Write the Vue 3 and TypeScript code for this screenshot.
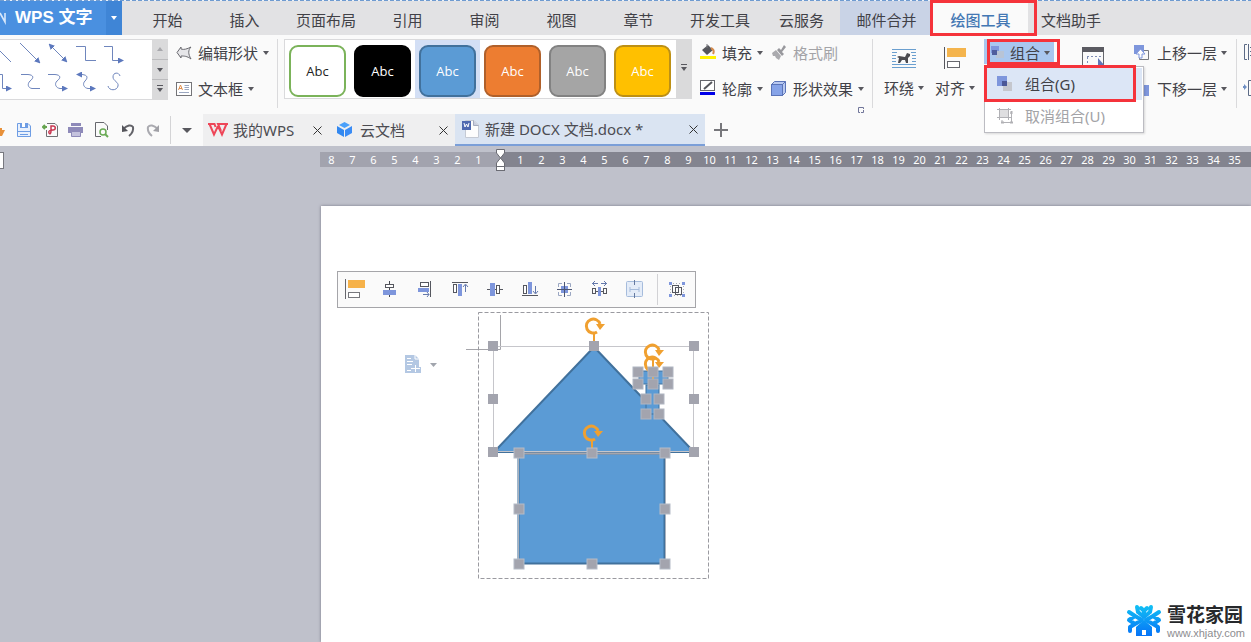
<script setup lang="ts">
interface MenuTab {
  label: string
  kind?: 'wide' | 'merge' | 'active'
}

const menuTabs: MenuTab[] = [
  { label: '开始' },
  { label: '插入' },
  { label: '页面布局', kind: 'wide' },
  { label: '引用' },
  { label: '审阅' },
  { label: '视图' },
  { label: '章节' },
  { label: '开发工具', kind: 'wide' },
  { label: '云服务' },
  { label: '邮件合并', kind: 'merge' },
  { label: '绘图工具', kind: 'active' },
  { label: '文档助手', kind: 'wide' },
]

const swatches = ['outline', 'black', 'blue', 'orange', 'gray', 'gold']

const leftMarks = [8, 7, 6, 5, 4, 3, 2, 1]
const rightMarks = Array.from({ length: 35 }, (_, i) => i + 1)

const roofHandles = [
  [493, 346], [594, 346], [694, 346], [493, 399], [694, 399], [493, 452], [694, 452],
]
const wallHandles = [
  [519, 453], [592, 453], [665, 453], [519, 509], [665, 509], [519, 564], [592, 564], [665, 564],
]
const chimneyHandles = [
  [638, 372], [668, 372], [638, 384], [668, 384], [653, 372], [653, 384],
  [646, 399], [659, 399], [646, 414], [659, 414],
]
const rotators = [
  [594, 326], [653, 352], [653, 364], [592, 433],
]
</script>

<template>
  <div class="app">
    <header class="menubar">
      <button class="brand" type="button">
        <svg class="brand-mark" width="8" height="14" viewBox="0 0 8 14"><path d="M0 2 5 11V2" fill="none" stroke="#d8e8fb" stroke-width="1.6" /></svg>
        <span class="brand-name">WPS 文字</span>
        <span class="brand-drop"><i class="caret"></i></span>
      </button>
      <nav class="tabs">
        <button v-for="t in menuTabs" :key="t.label" type="button" class="tab" :class="t.kind">{{ t.label }}</button>
      </nav>
    </header>

    <section class="ribbon">
      <div class="shape-gallery">
        <svg class="lines" width="152" height="59" viewBox="0 40 152 59" fill="none" stroke="#6f86bd" stroke-width="1">
          <defs>
            <marker id="tip" viewBox="0 0 6 6" refX="4" refY="3" markerWidth="6" markerHeight="6" orient="auto-start-reverse"><path d="M0 0 6 3 0 6z" fill="#5c78bd" stroke="none" /></marker>
          </defs>
          <path d="M0 51 11 62" />
          <path d="M20 43 39 62" marker-end="url(#tip)" />
          <path d="M50 45 66 61" marker-start="url(#tip)" marker-end="url(#tip)" />
          <path d="M76 46.500H85.500V60.500H96" />
          <path d="M104 46.500H112.500V60.500H122" marker-end="url(#tip)" />
          <path d="M0 74.500H2.500V88.500H10" marker-end="url(#tip)" />
          <path d="M21 74.500H28C34 75 34 78 30 81C27 84 28 88 32 88.500H40" />
          <path d="M48 74.500H55C61 75 61 78 57 81C54 84 56 88 60 88.500H66" marker-end="url(#tip)" />
          <path d="M78 74.500H82C88 75 88 78 85 81C82 84 84 88 88 88.500H94" marker-start="url(#tip)" marker-end="url(#tip)" />
          <path d="M120 76C119 72 113 72 113 77C113 81 119 82 118 86C117 91 109 91 108 86" />
        </svg>
        <div class="scroller">
          <button type="button" aria-label="上"><i class="caret up"></i></button>
          <button type="button" aria-label="下"><i class="caret"></i></button>
          <button type="button" aria-label="更多"><i class="caret more"></i></button>
        </div>
      </div>

      <div class="col edit-col">
        <button type="button" class="cmd">
          <svg width="16" height="16" viewBox="0 0 16 16"><path d="M1 7.500 5 2V4C8 5 11 4 15 2C12 5 12 9 15 14C11 11 8 11 5 11V13z" fill="#e6e6e9" stroke="#6a6a70" /></svg>
          <span>编辑形状</span><i class="caret"></i>
        </button>
        <button type="button" class="cmd">
          <svg width="16" height="16" viewBox="0 0 16 16" fill="none"><rect x=".5" y="1.500" width="15" height="13" fill="#fff" stroke="#747478" /><path d="M2.500 9 4.500 4 6.500 9M3 7.500H6" stroke="#e09050" /><path d="M8.500 4.500H13M8.500 6.500H13M8.500 8.500H13M3 11.500H13" stroke="#9ba7c0" /></svg>
          <span>文本框</span><i class="caret"></i>
        </button>
      </div>
      <i class="rule"></i>

      <div class="style-gallery">
        <div v-for="s in swatches" :key="s" class="cell" :class="{ picked: s === 'blue' }">
          <button type="button" class="swatch" :class="s">Abc</button>
        </div>
        <button type="button" class="expand" aria-label="更多样式"><i class="caret more"></i></button>
      </div>

      <div class="col fill-col">
        <button type="button" class="cmd">
          <svg width="16" height="18" viewBox="0 0 16 18"><path d="M2 6 8 1 13 6 7 11z" fill="#55565c" /><path d="M7 0V4" stroke="#77777d" /><path d="M11 4Q15 6 13 10" fill="none" stroke="#d58a4c" stroke-width="2" /><rect y="12" width="16" height="3" fill="#fff200" /></svg>
          <span>填充</span><i class="caret"></i>
        </button>
        <button type="button" class="cmd">
          <svg width="16" height="18" viewBox="0 0 16 18"><rect x=".5" y=".5" width="14" height="10" fill="#fff" stroke="#66676d" /><path d="M4 9 12 2" stroke="#55565c" stroke-width="2" /><rect y="12" width="15" height="3" fill="#0000e8" /></svg>
          <span>轮廓</span><i class="caret"></i>
        </button>
      </div>
      <div class="col effect-col">
        <button type="button" class="cmd off" disabled>
          <svg width="16" height="16" viewBox="0 0 16 16"><path d="M1 8 5 5 10 11 8 15 5 13 4 11 2 11z" fill="#aaaaae" /><path d="M6 5 8 3 10 5 13 0 15 2 11 7 13 9 11 11z" fill="#98989d" /></svg>
          <span>格式刷</span>
        </button>
        <button type="button" class="cmd">
          <svg width="16" height="16" viewBox="0 0 16 16" stroke="#5b74b8"><path d="M.5 3.500 3.500 .5H14.500V11.500L11.500 14.500H.5z" fill="#b9c9f0" /><rect x=".5" y="3.500" width="11" height="11" fill="#86a3e8" /><path d="M11.500 3.500 14.500 .5" /></svg>
          <span>形状效果</span><i class="caret"></i>
        </button>
        <svg class="launcher" width="6" height="6" viewBox="0 0 6 6" fill="none" stroke="#71769a"><path d="M5.500 2V.5H.5V5.500H2M3 5.500H5.500V3" /></svg>
      </div>
      <i class="rule"></i>

      <div class="big-col">
        <button type="button" class="big">
          <svg width="24" height="20" viewBox="0 0 24 20"><path d="M0 .5H24M0 3.500H24M0 6.500H4M20 6.500H24M0 9.500H4M20 9.500H24M0 12.500H4M20 12.500H24M0 15.500H24M0 18.500H24" stroke="#6b9fcf" /><path d="M5 3H19V15H5z" fill="#fafafa" /><path d="M6 14 7 9 5 8 7 7 13 8 15 4 18 5 18 7 16 9 16 14H14L13 11H10L8 14z" fill="#4b4b50" /></svg>
          <span class="big-label">环绕<i class="caret"></i></span>
        </button>
        <button type="button" class="big">
          <svg width="24" height="24" viewBox="0 0 24 24"><path d="M1.500 0V22" stroke="#55565c" /><rect x="4" y="1" width="19" height="9" fill="#f4b44d" /><rect x="4.500" y="14.500" width="12" height="6" fill="#fff" stroke="#66676d" /></svg>
          <span class="big-label">对齐<i class="caret"></i></span>
        </button>
      </div>

      <div class="group-col">
        <button type="button" class="cmd group-btn">
          <svg width="14" height="14" viewBox="0 0 14 14"><rect width="8" height="7" fill="#7e96dc" /><rect x="5" y="5" width="8" height="7" fill="#b8c4d6" /><rect x="1" y="4" width="5" height="5" fill="#4e5d9e" /></svg>
          <span>组合</span><i class="caret"></i>
        </button>
        <i class="callout group-callout"></i>
        <div class="popup" role="menu">
          <button type="button" class="item hot" role="menuitem">
            <svg width="16" height="16" viewBox="0 0 16 16"><rect width="10" height="10" fill="#7e96dc" /><rect x="6" y="6" width="9" height="9" fill="#c5c7ce" /><rect x="5" y="5" width="5" height="5" fill="#4c5898" /></svg>
            <span>组合(G)</span>
          </button>
          <button type="button" class="item dim" role="menuitem" disabled>
            <svg width="16" height="16" viewBox="0 0 16 16" fill="none" stroke="#b1b1b5"><rect x="2.500" y="1.500" width="9" height="8" fill="#dedee0" /><path d="M0 1.500H14M2.500 0V12M11.500 0V12M0 9.500H14M5 12V14.500H14.500V5H13" /><path d="M4 14.500H7M14.500 3V6M13 14.500H16" stroke-width="2" /></svg>
            <span>取消组合(U)</span>
          </button>
          <i class="callout item-callout"></i>
        </div>
      </div>

      <button type="button" class="select-btn" aria-label="选择窗格">
        <svg width="24" height="24" viewBox="0 0 24 24"><path d="M1.500 4V22M22.500 4V22" stroke="#66676d" /><rect x="1" width="22" height="5" fill="#5b5b62" /><path d="M6 9.500H20M6.500 10V20" stroke="#7f8db5" stroke-dasharray="2 2" /><path d="M17 11V20H25z" fill="#6176b8" /></svg>
      </button>

      <div class="col layer-col">
        <button type="button" class="cmd">
          <svg width="16" height="16" viewBox="0 0 16 16"><rect width="10" height="9" fill="#7e96dc" /><path d="M10 5.500H14.500V14.500H5.500V12" fill="none" stroke="#77797f" /><path d="M5 13V9H2L6.500 4 11 9H8V13z" fill="#fff" stroke="#7e96dc" /></svg>
          <span>上移一层</span><i class="caret"></i>
        </button>
        <button type="button" class="cmd">
          <svg width="16" height="16" viewBox="0 0 16 16"><rect x="4" y="4" width="11" height="11" fill="#7e96dc" /><path d="M.5 .5H9.500V9.500H.5z" fill="#fff" stroke="#77797f" /></svg>
          <span>下移一层</span><i class="caret"></i>
        </button>
      </div>
      <i class="rule"></i>
      <div class="col size-col">
        <svg width="16" height="36" viewBox="0 0 16 36" fill="none" stroke="#5c6a86"><path d="M4 9.500H1.500V24.500H4M5.500 9V25M7 12.500H10M7 16.500H10M7 20.500H10" /></svg>
        <svg width="16" height="36" viewBox="0 0 16 36" fill="none" stroke="#5c6a86"><path d="M9 9.500H5.500V24.500H9" /><path d="M0 15H1V13L4 16 1 19V17H0z" fill="#6f8fc4" stroke="none" /></svg>
      </div>
    </section>

    <section class="docbar">
      <div class="quick">
        <button type="button" aria-label="打开"><svg width="16" height="16" viewBox="0 0 16 16"><path d="M4 4H10V6H12V8H15L12 14H4z" fill="#e8913a" /></svg></button>
        <button type="button" aria-label="保存"><svg width="16" height="16" viewBox="0 0 16 16" fill="none"><path d="M1.500 1.500H12L14.500 4V14.500H1.500z" fill="#e9f1fd" stroke="#6e9de4" /><path d="M4 1H12V6H4z" fill="#6e9de4" /><path d="M6 1H9V5H6z" fill="#fff" /><path d="M1 9.500H15M4 12.500H12" stroke="#6e9de4" /></svg></button>
        <button type="button" aria-label="输出为PDF"><svg width="16" height="16" viewBox="0 0 16 16" fill="none"><path d="M4.500 8V14.500H15.500V4L13 1.500H5" stroke="#707074" /><path d="M7 11C8 13 9 11 9 9V4H11C14 4 14 8 11 8C8 8 6 9 7 11" stroke="#c93751" stroke-width="1.500" /><path d="M5 5H1M3 3 1 5 3 7" stroke="#65a44f" stroke-width="2" /></svg></button>
        <button type="button" aria-label="打印"><svg width="16" height="16" viewBox="0 0 16 16"><rect x="3" y="1" width="10" height="3" fill="#8e8ab9" /><rect y="5" width="15" height="6" fill="#8e8ab9" /><path d="M3.500 9.500H12.500V14.500H3.500z" fill="#c4c2dd" stroke="#8e8ab9" /></svg></button>
        <button type="button" aria-label="打印预览"><svg width="16" height="16" viewBox="0 0 16 16" fill="none"><path d="M7 14.500H1.500V.5H10L13.500 4V8" stroke="#66676d" /><circle cx="9" cy="10" r="3" stroke="#6aaa55" stroke-width="1.500" /><path d="M11 12 14 15" stroke="#6aaa55" stroke-width="2" /></svg></button>
        <button type="button" aria-label="撤销"><svg width="16" height="16" viewBox="0 0 16 16"><path d="M3 7Q10 1 13 5Q14 10 9 14" fill="none" stroke="#626268" stroke-width="2" /><path d="M2 3V10L8 9z" fill="#55555b" /></svg></button>
        <button type="button" aria-label="恢复"><svg width="16" height="16" viewBox="0 0 16 16"><path d="M12 7Q5 1 2 5Q1 10 6 14" fill="none" stroke="#aaaab0" stroke-width="2" /><path d="M13 3V10L7 9z" fill="#a0a0a6" /></svg></button>
      </div>
      <i class="quick-rule"></i>
      <button type="button" class="quick-more" aria-label="自定义"><i class="caret large"></i></button>

      <div class="doc">
        <svg width="20" height="16" viewBox="0 0 20 16"><path d="M0 2H6.500L7.500 5M1.500 2 6 12.500 10 4 14 12.500 18.500 2M20 2H10L13 9" fill="none" stroke="#ee4658" stroke-width="2" /></svg>
        <a href="#">我的WPS</a>
        <button type="button" class="close" aria-label="关闭"><svg width="9" height="9" viewBox="0 0 9 9"><path d="M.5 .5 8.500 8.500M8.500 .5 .5 8.500" stroke="#333" /></svg></button>
      </div>
      <div class="doc cloud">
        <svg width="16" height="16" viewBox="0 0 16 16"><path d="M7.500 0 13 3 7.500 6 2 3z" fill="#4aa0fa" /><path d="M0 4 7 8V15L0 11z" fill="#3288f0" /><path d="M15 4 8 8V15L15 11z" fill="#3a8cf5" /></svg>
        <a href="#">云文档</a>
        <button type="button" class="close" aria-label="关闭"><svg width="9" height="9" viewBox="0 0 9 9"><path d="M.5 .5 8.500 8.500M8.500 .5 .5 8.500" stroke="#333" /></svg></button>
      </div>
      <div class="doc current">
        <svg width="18" height="20" viewBox="0 0 18 20"><path d="M3.500 1.500H12L16.500 6V18.500H3.500z" fill="#fdfdfd" stroke="#c5cad4" /><path d="M11.500 1.500V6.500H16.500" fill="#c9cede" stroke="#a5acbf" /><rect y="2" width="9" height="9" fill="#4f69b0" /><path d="M2 4 3 8 4.500 5 6 8 7 4" fill="none" stroke="#fff" /></svg>
        <a href="#">新建 DOCX 文档.docx *</a>
        <button type="button" class="close" aria-label="关闭"><svg width="9" height="9" viewBox="0 0 9 9"><path d="M.5 .5 8.500 8.500M8.500 .5 .5 8.500" stroke="#333" /></svg></button>
      </div>
      <button type="button" class="plus" aria-label="新建标签"><svg width="14" height="14" viewBox="0 0 14 14"><path d="M7 0V14M0 7H14" stroke="#77777b" stroke-width="2" /></svg></button>
    </section>

    <main class="workspace">
      <div class="ruler-row">
        <i class="ruler-corner"></i>
        <div class="ruler margin-part"><span v-for="n in leftMarks" :key="n">{{ n }}</span></div>
        <div class="ruler text-part">
          <span v-for="n in rightMarks" :key="n">{{ n }}</span>
          <svg class="indent" width="9" height="23" viewBox="0 0 9 23" fill="#fff" stroke="#6b6c74"><path d="M.5 .5H8.500V4L4.500 9 .5 4z" /><path d="M4.500 9 8.500 14V17.500H.5V14z" /><rect x=".5" y="17.500" width="8" height="4" /></svg>
        </div>
      </div>

      <div class="page">
        <div class="align-bar" role="toolbar">
          <button type="button" aria-label="左对齐"><svg viewBox="0 0 24 24"><path d="M2.500 1V21" stroke="#66676d" /><rect x="5" y="2" width="17" height="8" fill="#f6b24a" /><rect x="5.500" y="14.500" width="11" height="5" fill="#fff" stroke="#77787d" /></svg></button>
          <button type="button" aria-label="水平居中"><svg viewBox="0 0 24 24"><path d="M11.500 3V19" stroke="#44474f" /><rect x="7.500" y="6.500" width="8" height="3" fill="#fff" stroke="#55575f" /><rect x="5" y="12" width="13" height="5" fill="#7e96dc" /></svg></button>
          <button type="button" aria-label="右对齐"><svg viewBox="0 0 24 24" fill="none" stroke="#55575f"><path d="M17.500 3V19" /><path d="M10 16.500H16M14 14 16 16.500 14 19" stroke="#6479ac" /><rect x="7.500" y="4.500" width="8" height="4" fill="#fff" /><path d="M5 10H16V14H5z" fill="#7e96dc" stroke="none" /></svg></button>
          <button type="button" aria-label="顶端对齐"><svg viewBox="0 0 24 24" fill="none" stroke="#55575f"><path d="M4 4.500H20" /><path d="M17.500 14V7M15 9 17.500 6 20 9" stroke="#6479ac" /><rect x="5.500" y="6.500" width="3" height="8" fill="#fff" /><path d="M10 6H14V18H10z" fill="#7e96dc" stroke="none" /></svg></button>
          <button type="button" aria-label="垂直居中"><svg viewBox="0 0 24 24" fill="none" stroke="#55575f"><path d="M4 11.500H20" /><path d="M7 5H12V18H7z" fill="#7e96dc" stroke="none" /><rect x="13.500" y="7.500" width="3" height="8" fill="#fff" /></svg></button>
          <button type="button" aria-label="底端对齐"><svg viewBox="0 0 24 24" fill="none" stroke="#55575f"><path d="M4 17.500H20" /><path d="M17.500 8V15M15 13 17.500 16 20 13" stroke="#6479ac" /><rect x="5.500" y="7.500" width="3" height="8" fill="#fff" /><path d="M10 4H14V16H10z" fill="#7e96dc" stroke="none" /></svg></button>
          <button type="button" aria-label="中心对齐"><svg viewBox="0 0 24 24" fill="none"><path d="M5.500 9V5.500H9M14 5.500H17.500V9M17.500 14V17.500H14M9 17.500H5.500V14" stroke="#9aa6c2" /><path d="M8 8H15V15H8z" fill="#7e96dc" /><path d="M11.500 4V19M4 11.500H19" stroke="#4c5674" /></svg></button>
          <button type="button" aria-label="横向分布"><svg viewBox="0 0 24 24" fill="none" stroke="#55575f"><path d="M4 5.500H10M13 5.500H19M7 3 4.500 5.500 7 8M16 3 18.500 5.500 16 8" stroke="#6479ac" /><rect x="4.500" y="10.500" width="3" height="5" /><rect x="15.500" y="10.500" width="3" height="5" /><path d="M8 13.500H15" /><path d="M10 9H13V18H10z" fill="#7e96dc" stroke="none" /></svg></button>
          <button type="button" aria-label="相对于页"><svg viewBox="0 0 24 24" fill="none" stroke="#a6bcdc"><rect x="3.500" y="3.500" width="16" height="15" rx="1" fill="#e4ecf8" /><path d="M7 11.500H16M7 9V14M16 9V14" /><path d="M11.500 2V7M11.500 15V20" stroke="#65799f" /></svg></button>
          <button type="button" class="group-tool" aria-label="组合"><svg viewBox="0 0 24 24" fill="none" stroke="#55575f"><path d="M8 5.500H16M18.500 8V16M16 17.500H8M5.500 15V8" stroke="#a9acb8" stroke-dasharray="1 2" /><rect x="7.500" y="7.500" width="6" height="7" /><rect x="10.500" y="9.500" width="6" height="7" /><path d="M4 4H7V7H4zM17 4H20V7H17zM4 16H7V19H4zM17 16H20V19H17z" fill="#7e96dc" stroke="none" /></svg></button>
        </div>

        <svg class="drawing" width="316" height="274" viewBox="400 308 316 274">
          <path d="M466 349.500H500.500V315" fill="none" stroke="#a5a5aa" />
          <rect x="478.500" y="312.500" width="230" height="266" fill="none" stroke="#9a9aa0" stroke-dasharray="4 2" />
          <path d="M405 355H415L419 359V367H421V373H405z" fill="#b4c8e3" />
          <path d="M415 355V359H419M407 358.500H411M407 361.500H413M407 364.500H412M407 370.500H411" stroke="#fff" fill="none" />
          <path d="M411 368.500H420M415.500 365V372" stroke="#fff" />
          <path d="M430 363H437L433.500 367z" fill="#a1a5ad" />
          <path d="M594 347 694 452H494z" fill="#5b9bd5" stroke="#41719c" stroke-width="2" />
          <rect x="493.500" y="346.500" width="200" height="105" fill="none" stroke="#c6c6cb" />
          <rect x="518.500" y="453.500" width="146" height="110" fill="#5b9bd5" stroke="#41719c" stroke-width="2" />
          <path d="M519 453.500H665" stroke="#a5a6ad" stroke-width="2" />
          <path d="M518.500 453V564M665.500 453V564" stroke="#a9b1bd" />
          <rect x="639" y="371" width="29" height="13" fill="#5b9bd5" stroke="#41719c" />
          <rect x="646" y="385" width="13" height="29" fill="#5b9bd5" stroke="#41719c" />
          <g v-for="([x, y], i) in rotators" :key="'r' + i" fill="none" stroke="#f0a030">
            <path :d="`M${x} ${y + 7}V${y + 16}`" stroke-width="2" />
            <path :d="`M${x + 3} ${y + 6}A7 7 0 1 1 ${x + 6} ${y - 2}`" stroke-width="3" />
            <path :d="`M${x + 2} ${y - 2}H${x + 11}L${x + 6} ${y + 4}z`" fill="#f0a030" stroke="none" />
          </g>
          <rect v-for="([x, y], i) in roofHandles" :key="'a' + i" :x="x - 5" :y="y - 5" width="10" height="10" fill="#a3a4ae" />
          <rect v-for="([x, y], i) in wallHandles" :key="'b' + i" :x="x - 5" :y="y - 5" width="10" height="10" fill="#a3a4ae" stroke="#b5bcc7" />
          <rect v-for="([x, y], i) in chimneyHandles" :key="'c' + i" :x="x - 5" :y="y - 5" width="10" height="10" fill="#a3a4ae" stroke="#b0b6c2" />
        </svg>
      </div>
    </main>

    <aside class="site-mark">
      <svg width="36" height="34" viewBox="0 0 36 34" fill="none" stroke-linecap="round" stroke-linejoin="round">
        <defs><linearGradient id="ice" x1="0" y1="0" x2="0" y2="34" gradientUnits="userSpaceOnUse"><stop offset="0" stop-color="#12c6f4" /><stop offset="1" stop-color="#0670f7" /></linearGradient></defs>
        <g stroke="url(#ice)" stroke-width="4">
          <path d="M11 4 12 9 18 14 24 9 25 4M15 5 18 8 21 5M18 8V14" />
          <path d="M3 17 9 13 16 17 9 21zM9 13 3 9M9 21 4 24V28" />
          <path d="M33 17 27 13 20 17 27 21zM27 13 33 9M27 21 32 24V28" />
        </g>
        <path d="M18 17 26 24V33H10V24zM16 27V32H20V27z" fill="url(#ice)" fill-rule="evenodd" />
      </svg>
      <div class="site-text"><strong>雪花家园</strong><span>www.xhjaty.com</span></div>
    </aside>
  </div>
</template>

<style>
html,
body {
  margin: 0;
}
</style>

<style scoped>
.app {
  position: relative;
  display: flex;
  flex-direction: column;
  min-height: 100vh;
  overflow: hidden;
  background: #bfc1cb;
  color: #414147;
  font-family: "Noto Sans", "Noto Sans CJK SC", sans-serif;
  font-size: 15px;
  line-height: 20px;
}
button {
  display: flex;
  align-items: center;
  margin: 0;
  padding: 0;
  border: 0;
  background: none;
  color: inherit;
  font: inherit;
  white-space: nowrap;
}
svg {
  display: block;
  flex: none;
}
.caret {
  flex: none;
  width: 0;
  height: 0;
  border: 3px solid transparent;
  border-top: 4px solid #58585e;
  border-bottom: 0;
}
.caret.up {
  border-top: 0;
  border-bottom: 4px solid #a8a8ac;
}
.caret.large {
  border-width: 5px 5px 0;
}
.caret.more {
  position: relative;
}
.caret.more::before {
  content: "";
  position: absolute;
  left: -3px;
  top: -7px;
  width: 6px;
  height: 1px;
  background: #58585e;
}
.callout {
  position: absolute;
  box-sizing: border-box;
  border: 3px solid #f5333b;
  pointer-events: none;
  z-index: 3;
}

/* menu bar */
.menubar {
  display: flex;
  height: 35px;
  background: #e2e2e4;
}
.menubar::before {
  content: "";
  position: absolute;
  top: 0;
  left: 0;
  right: 0;
  height: 1px;
  background: repeating-linear-gradient(90deg, #6f9bd0 0 4px, #e9f1fb 4px 6px);
  z-index: 2;
}
.brand {
  width: 122px;
  margin-right: 7px;
  background: #4a90e0;
  color: #fff;
}
.brand-name {
  flex: 1;
  padding-left: 7px;
  font: bold 17px/20px "Liberation Sans", "Noto Sans CJK SC", sans-serif;
  text-align: left;
}
.brand-drop {
  display: flex;
  align-items: center;
  justify-content: center;
  align-self: stretch;
  width: 16px;
  background: #3f85d6;
}
.brand-drop .caret {
  border-top-color: #fff;
}
.tabs {
  display: flex;
}
.tab {
  justify-content: center;
  width: 77px;
  padding-top: 5px;
}
.tab.wide {
  width: 86px;
}
.tab.merge {
  width: 93px;
  background: #c9d3e6;
}
.tab.active {
  position: relative;
  width: 95px;
  background: #fafafa;
  color: #4478b4;
  font-weight: 500;
}
.tab.active::after {
  content: "";
  position: absolute;
  inset: 0 -9px -1px -3px;
  border: 3px solid #f5333b;
  z-index: 3;
}

/* ribbon */
.ribbon {
  display: flex;
  align-items: flex-start;
  height: 79px;
  background: #fafafa;
}
.rule {
  flex: none;
  width: 1px;
  height: 69px;
  margin-top: 4px;
  background: #dadadc;
}
.col {
  display: flex;
  flex-direction: column;
  flex: none;
}
.cmd {
  height: 36px;
  gap: 6px;
}
.cmd .caret {
  margin-left: -1px;
}
.off {
  color: #a3a3a7;
}
.shape-gallery {
  display: flex;
  flex: none;
  width: 168px;
  margin-top: 4px;
}
.lines {
  border-top: 1px solid #dadadc;
  border-bottom: 1px solid #dadadc;
  background: #fff;
}
.scroller {
  display: flex;
  flex: 1;
  flex-direction: column;
  gap: 1px;
  background: #bcbcbe;
}
.scroller button {
  flex: 1;
  justify-content: center;
  background: #dadadb;
}
.edit-col {
  width: 101px;
  padding-left: 8px;
}
.style-gallery {
  display: flex;
  flex: none;
  box-sizing: border-box;
  height: 60px;
  margin: 4px 0 0 6px;
  border: 1px solid #dadadc;
  border-right: 0;
  background: #fff;
}
.cell {
  display: flex;
  align-items: flex-end;
  justify-content: center;
  width: 65px;
  padding-bottom: 1px;
}
.cell.picked {
  background: #d3dff5;
}
.swatch {
  box-sizing: border-box;
  justify-content: center;
  width: 57px;
  height: 52px;
  border: 2px solid;
  border-radius: 9px;
  color: #fff;
  font: 13px/16px "Open Sans", "Noto Sans", sans-serif;
}
.swatch.outline {
  border-color: #7bb35a;
  color: #222;
}
.swatch.black {
  border-color: #000;
  background: #000;
}
.swatch.blue {
  border-color: #41719c;
  background: #5b9bd5;
}
.swatch.orange {
  border-color: #b0602a;
  background: #ed7d31;
}
.swatch.gray {
  border-color: #828282;
  background: #a5a5a5;
}
.swatch.gold {
  border-color: #bd9015;
  background: #ffc000;
}
.expand {
  justify-content: center;
  width: 16px;
  margin-left: 1px;
  background: #dadadb;
}
.fill-col {
  width: 63px;
  padding-left: 8px;
}
.effect-col {
  width: 93px;
  padding: 0 8px;
}
.launcher {
  align-self: flex-end;
}
.big-col {
  display: flex;
  flex: none;
  gap: 11px;
  width: 111px;
  box-sizing: border-box;
  padding-left: 11px;
}
.big {
  flex-direction: column;
  justify-content: flex-end;
  gap: 9px;
  height: 63px;
}
.big:last-child {
  gap: 7px;
}
.big-label {
  display: flex;
  align-items: center;
  gap: 4px;
}
.group-col {
  position: relative;
  flex: none;
  width: 76px;
}
.group-btn {
  width: 70px;
  height: 25px;
  margin-top: 4px;
  box-sizing: border-box;
  padding: 2px 0 0 7px;
  gap: 5px;
  background: #a9c7ef;
}
.group-callout {
  left: 3px;
  top: 4px;
  width: 73px;
  height: 26px;
}
.popup {
  position: absolute;
  left: 0;
  top: 31px;
  box-sizing: border-box;
  width: 160px;
  padding: 1px 1px 0;
  border: 1px solid #bcbcc2;
  background: #fff;
  box-shadow: 1px 1px 2px #00000022;
  z-index: 2;
}
.item {
  width: 100%;
  height: 32px;
  padding-left: 11px;
  gap: 12px;
}
.item.hot {
  background: #dce6f6;
}
.item.dim {
  color: #a3a3a7;
}
.item-callout {
  left: -1px;
  top: -2px;
  width: 152px;
  height: 37px;
}
.select-btn {
  margin: 12px 0 0 21px;
}
.layer-col {
  padding: 0 9px 0 29px;
}
.layer-col .cmd {
  gap: 7px;
}
.layer-col .caret {
  margin-left: -3px;
}
.size-col {
  padding-left: 6px;
}

/* document tabs */
.docbar {
  display: flex;
  align-items: center;
  height: 32px;
  background: #fafafa;
}
.quick {
  display: flex;
  flex: none;
  gap: 10px;
  margin-left: -10px;
}
.quick-rule {
  width: 1px;
  height: 28px;
  margin-left: 8px;
  background: #d4d4d6;
}
.quick-more {
  margin: 0 11px;
}
.doc {
  display: flex;
  align-items: center;
  box-sizing: border-box;
  gap: 5px;
  width: 126px;
  height: 32px;
  padding: 0 7px 0 5px;
  background: #efeff0;
}
.doc a {
  flex: 1;
  color: #4c4c52;
  text-decoration: none;
  white-space: nowrap;
}
.doc.cloud {
  gap: 7px;
  padding-left: 8px;
}
.doc.current {
  width: 250px;
  padding-left: 7px;
  border-bottom: 2px solid #7b9fd8;
  background: #dae4f2;
}
.plus {
  margin-left: 9px;
}

/* workspace */
.workspace {
  display: flex;
  flex: 1;
  flex-direction: column;
}
.ruler-row {
  display: flex;
  margin-top: 6px;
}
.ruler-corner {
  flex: none;
  box-sizing: border-box;
  width: 4px;
  height: 17px;
  margin-right: 316px;
  border: 1px solid #77787f;
  border-left: 0;
  background: #fff;
}
.ruler {
  display: flex;
  height: 15px;
  color: #fff;
  font-size: 11px;
  line-height: 15px;
}
.ruler span {
  flex: none;
  width: 21px;
  text-align: center;
}
.margin-part {
  flex: none;
  box-sizing: border-box;
  width: 180px;
  padding-left: 1px;
  background: #a2a3ae;
}
.text-part {
  position: relative;
  flex: 1;
  min-width: 0;
  padding-left: 10px;
  background: #83848f;
}
.indent {
  position: absolute;
  left: -4px;
  top: -3px;
}
.page {
  flex: 1;
  margin: 37px 0 0 321px;
  padding: 65px 16px 0;
  background: #fff;
  box-shadow: 0 0 3px #777986;
}
.align-bar {
  display: flex;
  box-sizing: border-box;
  width: 359px;
  height: 37px;
  border: 1px solid #a5a5a9;
  background: #fafafa;
}
.align-bar button {
  box-sizing: border-box;
  flex: none;
  justify-content: center;
  width: 35px;
  padding-right: 1px;
}
.align-bar svg {
  width: 24px;
  height: 24px;
}
.align-bar .group-tool {
  width: 38px;
  height: 31px;
  margin: 2px 0 0 auto;
  border-left: 1px solid #d2d2d5;
  padding: 0 0 0 1px;
}
.drawing {
  margin-left: 63px;
}

.site-mark {
  position: absolute;
  right: 6px;
  bottom: 3px;
  display: flex;
  align-items: flex-end;
  gap: 5px;
}
.site-mark svg {
  margin-bottom: 2px;
}
.site-text {
  display: flex;
  flex-direction: column;
}
.site-text strong {
  color: #26282b;
  font: bold 19px/22px "Liberation Sans", "Noto Sans CJK SC", sans-serif;
}
.site-text span {
  color: #8d8d90;
  font: 11px/12px "Liberation Sans", sans-serif;
}
</style>
